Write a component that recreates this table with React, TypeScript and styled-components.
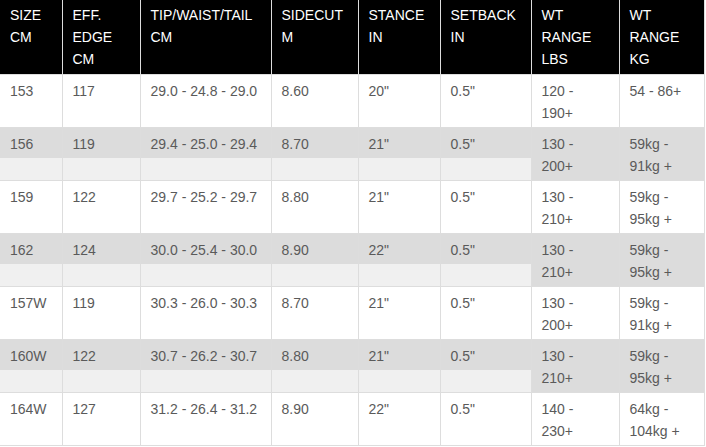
import React from "react";
import styled, { createGlobalStyle } from "styled-components";

const Global = createGlobalStyle`
  html, body { margin: 0; padding: 0; background: #fff; }
  body { font-family: "Liberation Sans", Arial, sans-serif; }
`;

const Table = styled.table`
  border-collapse: collapse;
  table-layout: fixed;
  width: 704px;
  font-family: "Liberation Sans", Arial, sans-serif;
  font-size: 14px;
  line-height: 22px;
`;

const HeadCell = styled.th`
  background: #000;
  color: #fff;
  font-weight: normal;
  text-align: left;
  vertical-align: top;
  padding: 4px 10px 4px;
  border-left: 1px solid #ddd;
  border-right: 1px solid #ddd;
  border-bottom: 1px solid #ddd;
  &:first-child { border-left: none; }
`;

const Row = styled.tr<{ $striped: boolean }>`
  background: ${(p) => (p.$striped ? "#f0f0f0" : "#fff")};
`;

const Cell = styled.td`
  padding: 0;
  vertical-align: top;
  border: 1px solid #ddd;
  color: #5a5a5a;
  &:first-child { border-left: none; }
`;

const Content = styled.div<{ $striped: boolean }>`
  padding: 5px 10px 3px;
  background: ${(p) => (p.$striped ? "#dcdcdc" : "transparent")};
  white-space: nowrap;
`;

const widths = [62, 78, 131, 87, 82, 91, 88, 85];

const headers: string[][] = [
  ["SIZE", "CM"],
  ["EFF.", "EDGE", "CM"],
  ["TIP/WAIST/TAIL", "CM"],
  ["SIDECUT", "M"],
  ["STANCE", "IN"],
  ["SETBACK", "IN"],
  ["WT", "RANGE", "LBS"],
  ["WT", "RANGE", "KG"],
];

const rows: string[][][] = [
  [["153"], ["117"], ["29.0 - 24.8 - 29.0"], ["8.60"], ['20"'], ['0.5"'], ["120 -", "190+"], ["54 - 86+"]],
  [["156"], ["119"], ["29.4 - 25.0 - 29.4"], ["8.70"], ['21"'], ['0.5"'], ["130 -", "200+"], ["59kg -", "91kg +"]],
  [["159"], ["122"], ["29.7 - 25.2 - 29.7"], ["8.80"], ['21"'], ['0.5"'], ["130 -", "210+"], ["59kg -", "95kg +"]],
  [["162"], ["124"], ["30.0 - 25.4 - 30.0"], ["8.90"], ['22"'], ['0.5"'], ["130 -", "210+"], ["59kg -", "95kg +"]],
  [["157W"], ["119"], ["30.3 - 26.0 - 30.3"], ["8.70"], ['21"'], ['0.5"'], ["130 -", "200+"], ["59kg -", "91kg +"]],
  [["160W"], ["122"], ["30.7 - 26.2 - 30.7"], ["8.80"], ['21"'], ['0.5"'], ["130 -", "210+"], ["59kg -", "95kg +"]],
  [["164W"], ["127"], ["31.2 - 26.4 - 31.2"], ["8.90"], ['22"'], ['0.5"'], ["140 -", "230+"], ["64kg -", "104kg +"]],
];

const Lines = ({ lines }: { lines: string[] }) => (
  <>
    {lines.map((l, i) => (
      <React.Fragment key={i}>
        {i > 0 && <br />}
        {l}
      </React.Fragment>
    ))}
  </>
);

export default function App() {
  return (
    <>
      <Global />
      <Table>
        <colgroup>
          {widths.map((w, i) => (
            <col key={i} style={{ width: w }} />
          ))}
        </colgroup>
        <thead>
          <tr>
            {headers.map((h, i) => (
              <HeadCell key={i}>
                <Lines lines={h} />
              </HeadCell>
            ))}
          </tr>
        </thead>
        <tbody>
          {rows.map((r, ri) => {
            const striped = ri % 2 === 1;
            return (
              <Row key={ri} $striped={striped}>
                {r.map((c, ci) => (
                  <Cell key={ci}>
                    <Content $striped={striped}>
                      <Lines lines={c} />
                    </Content>
                  </Cell>
                ))}
              </Row>
            );
          })}
        </tbody>
      </Table>
    </>
  );
}
